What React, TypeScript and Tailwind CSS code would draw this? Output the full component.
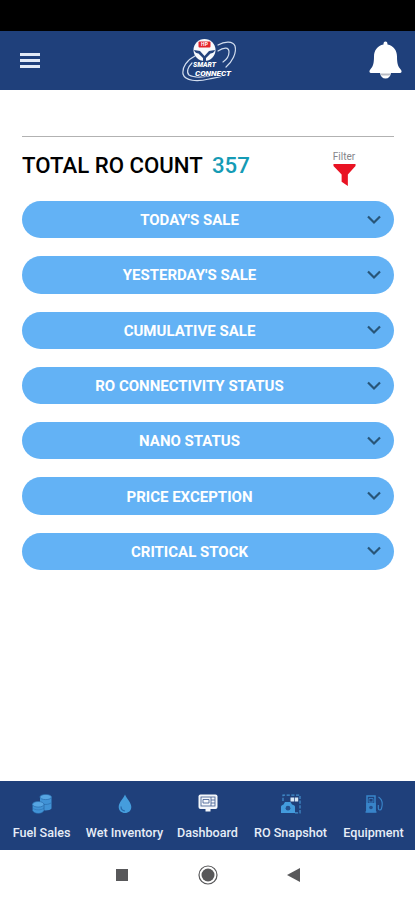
import * as React from 'react'

interface NavItem {
  label: string
  icon: React.ReactNode
}

const sections = [
  "TODAY'S SALE",
  "YESTERDAY'S SALE",
  'CUMULATIVE SALE',
  'RO CONNECTIVITY STATUS',
  'NANO STATUS',
  'PRICE EXCEPTION',
  'CRITICAL STOCK'
]

function Logo() {
  return (
    <svg width="56" height="46" viewBox="0 0 56 46" fill="none">
      {/* orbit swirls */}
      <g stroke="#d3deef" strokeWidth="1.2" strokeLinecap="round">
        <path d="M36 7C43 3 51 3 53 8C55 15 50 24 44 29" />
        <path d="M36 13C42 9 47 9 47 14C47 18 44 22 41 24" />
        <path d="M13 18C5 22 0 29 1 36C3 43 15 44 27 41C32 40 36 39.500 39 38.500" />
        <path d="M10 25C6 29 4 34 7 37C12 40 22 39 28 38" />
      </g>
      <circle cx="22.500" cy="12" r="11" fill="#f7f9fc" />
      <path d="M12 12L18 13L22.5 18L27 13L33 12C32.500 14.500 30 15.500 28.500 15.500L24 20V23H21V20L16.500 15.500C15 15.500 12.500 14.500 12 12Z" fill="#24447d" />
      <rect x="16.500" y="3.500" width="12" height="6" rx="1" fill="#e5242c" />
      <text x="22.500" y="8.400" textAnchor="middle" fontSize="5" fontWeight="700" fill="#fff" className="font-['Roboto',sans-serif]">HP</text>
      <g className="font-['Roboto',sans-serif]" fill="#fff" stroke="#1f407b" strokeWidth="1" paintOrder="stroke" fontWeight="900" fontStyle="italic">
        <text x="11" y="29" fontSize="7.500" textLength="23" lengthAdjust="spacingAndGlyphs">SMART</text>
        <text x="13" y="37.500" fontSize="7.500" textLength="36" lengthAdjust="spacingAndGlyphs">CONNECT</text>
      </g>
    </svg>
  )
}

function BellIcon() {
  return (
    <svg width="33" height="39" viewBox="0 0 33 39">
      <path d="M11 32H22C21.5 35.5 19.5 37.5 16.5 37.5S11.500 35.500 11 32Z" fill="#fff" />
      <path d="M11.500 32.500H21.500L20.500 34.500H12.500Z" fill="#b9bcc4" />
      <path d="M16.500 0.500C15 0.500 14.500 1.600 14.500 3.500C8.500 4.500 5 9.500 5 15.500C5 22.500 4 25.500 1.300 28.500C-0.200 30.300 0.300 32 2.500 32H30.500C32.700 32 33.200 30.300 31.700 28.500C29 25.500 28 22.500 28 15.500C28 9.500 24.500 4.500 18.500 3.500C18.500 1.600 18 0.500 16.500 0.500Z" fill="#fff" />
    </svg>
  )
}

function BarrelsIcon() {
  return (
    <svg width="20" height="20" viewBox="0 0 20 20" fill="#4193d6">
      <path d="M8 3V15C9.500 17 18.500 17 19.500 14.500V3Z" />
      <ellipse cx="13.700" cy="3" rx="5.800" ry="2.600" fill="#56a5e2" stroke="#2b6dad" strokeWidth="0.700" />
      <path d="M8 9C11 11 17 11 19.500 8.500" fill="none" stroke="#2b6dad" strokeWidth="0.700" />
      <path d="M0.500 10V16.500C2 20.500 10.500 20.500 12 16.500V10Z" stroke="#245a98" strokeWidth="0.600" />
      <ellipse cx="6.200" cy="10.300" rx="5.700" ry="2.800" fill="#56a5e2" stroke="#2b6dad" strokeWidth="0.700" />
      <path d="M0.500 14C3 16.500 9.500 16.500 12 14" fill="none" stroke="#2b6dad" strokeWidth="0.500" />
    </svg>
  )
}

function DropIcon() {
  return (
    <svg width="20" height="20" viewBox="0 0 20 20">
      <path d="M10 0.500C8.500 4.500 3.700 8.500 3.700 13C3.700 16.700 6.500 19 10 19S16.300 16.700 16.300 13C16.300 8.500 11.500 4.500 10 0.500Z" fill="#459ddd" />
      <path d="M6 12.500C6 15 7.500 16.700 10 17" fill="none" stroke="#2768aa" strokeWidth="1.200" />
    </svg>
  )
}

function DashboardIcon() {
  return (
    <svg width="20" height="20" viewBox="0 0 20 20">
      <rect x="0.500" y="0.500" width="19" height="14.500" rx="2" fill="#f4f7fb" />
      <rect x="3" y="3" width="14" height="9" fill="#f4f7fb" stroke="#4c6798" strokeWidth="0.900" />
      <path d="M5 5.500H11V9H5ZM13 3V12M13 6H17M13 9H17" fill="none" stroke="#4c6798" strokeWidth="0.900" />
      <path d="M7.500 15H12.500V17.500H7.500Z" fill="#f4f7fb" />
    </svg>
  )
}

function SnapshotIcon() {
  return (
    <svg width="20" height="20" viewBox="0 0 20 20">
      <path d="M2 7V1.200H19V18.800H14" fill="none" stroke="#438fce" strokeWidth="1.200" strokeDasharray="3.200 1.500" />
      <rect x="9.500" y="3.500" width="3.500" height="4" fill="#d9e7f5" />
      <rect x="13.700" y="3.500" width="3.500" height="4" fill="#d9e7f5" />
      <path d="M0 13C0 11.500 1 11 2.500 10.500L4 8H9.500L11 10.500C13 11 14 11.500 14 13V19H0Z" fill="#439bdd" />
      <circle cx="7" cy="14.200" r="2.400" fill="#24508e" />
    </svg>
  )
}

function PumpIcon() {
  return (
    <svg width="20" height="20" viewBox="0 0 20 20" fill="none" stroke="#3985ca" strokeWidth="1.500">
      <path d="M3 18V2H11V18" />
      <path d="M5 8H9V4.500H5Z" strokeWidth="0.800" />
      <path d="M3 9.500H11V17.500H3Z" fill="#3985ca" />
      <circle cx="7" cy="13.500" r="1.800" fill="#24508e" stroke="none" />
      <path d="M1.500 18H12.500" />
      <path d="M14.500 3C18.500 5.500 18.800 10 17.500 14.500C17 16.500 14.500 16.500 14.300 14.500V11" strokeWidth="1.100" />
    </svg>
  )
}

const navItems: NavItem[] = [
  { label: 'Fuel Sales', icon: <BarrelsIcon /> },
  { label: 'Wet Inventory', icon: <DropIcon /> },
  { label: 'Dashboard', icon: <DashboardIcon /> },
  { label: 'RO Snapshot', icon: <SnapshotIcon /> },
  { label: 'Equipment', icon: <PumpIcon /> }
]

function SectionButton({ label }: { label: string }) {
  return (
    <button className="flex h-[37.300px] w-full items-center rounded-full bg-[#63b2f5] pr-3">
      <span className="flex-1 pl-[2px] pr-[11px] pt-[2px] text-center text-[15px] font-bold leading-none text-white">
        {label}
      </span>
      <svg width="16" height="10" viewBox="0 0 16 10" fill="none" stroke="#285578" strokeWidth="2.200">
        <path d="M2 1.500L8 7.500L14 1.500" />
      </svg>
    </button>
  )
}

export default function App() {
  return (
    <div className="flex h-[900px] w-[415px] flex-col overflow-hidden bg-white font-['Roboto',sans-serif]">
      <div className="h-[31px] shrink-0 bg-black" />

      {/* app bar */}
      <header className="flex h-[59px] shrink-0 items-center justify-between bg-[#1f407b] pl-5 pr-[13px]">
        <button className="flex w-[30px] flex-col gap-[3px]" aria-label="Menu">
          <span className="h-[3px] w-5 bg-[#e2eaf6]" />
          <span className="h-[3px] w-5 bg-[#e2eaf6]" />
          <span className="h-[3px] w-5 bg-[#e2eaf6]" />
        </button>
        <Logo />
        <BellIcon />
      </header>

      <main className="flex-1 pl-[22px] pr-[21px] pt-[46px]">
        <hr className="border-[#b2b2b2]" />
        <div className="flex h-[64px] items-start">
          <h1 className="flex pt-[15px] text-[22.200px] font-medium leading-[26px] text-black">
            <span className="w-[190px] whitespace-nowrap">TOTAL RO COUNT</span>
            <span className="text-[#159bb5]">357</span>
          </h1>
          <div className="ml-auto mr-[38px] flex w-[24px] flex-col items-center pt-[14px]">
            <span className="text-[10px] leading-[12px] text-[#85858a]">Filter</span>
            <svg width="23" height="24" viewBox="0 0 24 24" fill="#e91323">
              <path d="M0.500 0.500H23.500V2.500L15.500 11.500V23.500L9 19V11.500L0.500 2.500Z" />
            </svg>
          </div>
        </div>
        <div className="flex flex-col gap-[18px]">
          {sections.map((label) => (
            <SectionButton key={label} label={label} />
          ))}
        </div>
      </main>

      {/* bottom tabs */}
      <nav className="grid h-[69px] shrink-0 grid-cols-5 bg-[#1f407b]">
        {navItems.map((item) => (
          <div key={item.label} className="flex flex-col items-center pt-[13px]">
            {item.icon}
            <span className="mt-[11px] whitespace-nowrap text-[12.600px] font-medium leading-4 text-[#e6edf7]">{item.label}</span>
          </div>
        ))}
      </nav>

      {/* system keys */}
      <div className="flex h-[50px] shrink-0 items-center justify-center gap-[70px] text-[#58585a]">
        <span className="size-3 bg-[#58585a]" />
        <svg width="20" height="20" viewBox="0 0 20 20">
          <circle cx="10" cy="10" r="9" fill="none" stroke="currentColor" strokeWidth="1.200" />
          <circle cx="10" cy="10" r="6.500" fill="currentColor" />
        </svg>
        <svg className="-ml-px" width="13" height="14" viewBox="0 0 13 14" fill="currentColor">
          <path d="M0 7L13 0V14Z" />
        </svg>
      </div>
    </div>
  )
}
